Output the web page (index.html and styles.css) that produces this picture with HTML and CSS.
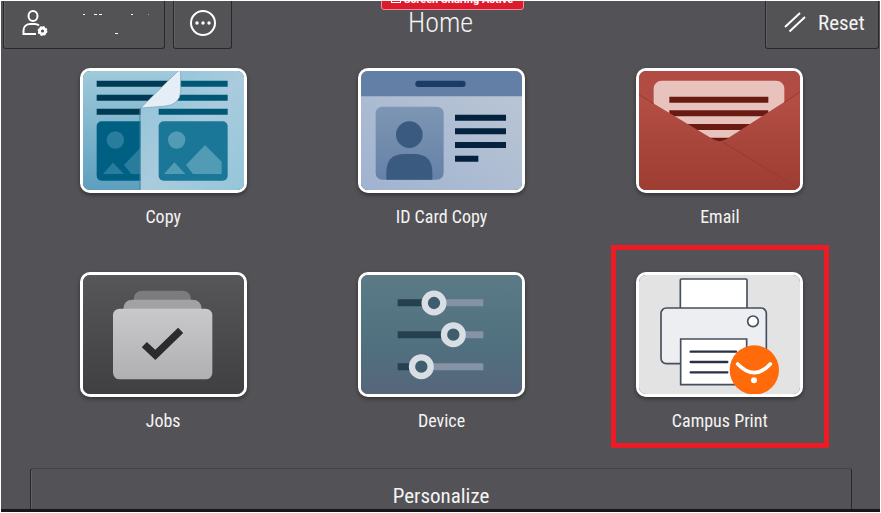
FILE: index.html
```html
<!DOCTYPE html>
<html lang="en">
<head>
	<meta charset="UTF-8">
	<title>Home</title>
	<link rel="stylesheet" href="styles.css">
</head>
<body>
	<div class="screen">
		<header class="topbar">
			<div class="topbar-left">
				<button class="btn btn-user" aria-label="User">
					<svg class="user-icon" viewBox="0 0 26 26" fill="none" stroke="#fff" stroke-width="2">
						<ellipse cx="11" cy="6" rx="4.5" ry="5"/>
						<path d="M14 24H1.500v-3.500c0-4 3-6.500 7-6.500h4c2 0 3.500.6 4.500 1.500"/>
						<circle cx="20.500" cy="21" r="3" stroke-width="2.800"/>
						<circle cx="20.500" cy="21" r="4.200" stroke-width="1.400" stroke-dasharray="1.900 1.400"/>
					</svg>
					<svg class="user-name" viewBox="0 0 70 26" fill="#fff">
						<path d="M2 4h2v1H2zM13 4h3v1h-3zM18 4h3v1h-3zM50 4h2v1h-2zM34 23h3v1h-3z"/>
						<path d="M67 4h1v1h-1z" opacity=".5"/>
					</svg>
				</button>
				<button class="btn btn-more" aria-label="More">
					<svg class="more-icon" viewBox="0 0 28 28">
						<circle cx="14" cy="14" r="12" fill="none" stroke="#fff" stroke-width="2"/>
						<g fill="#fff"><circle cx="8" cy="14" r="1.700"/><circle cx="14" cy="14" r="1.700"/><circle cx="20" cy="14" r="1.700"/></g>
					</svg>
				</button>
			</div>
			<h1 class="title">Home</h1>
			<div class="topbar-right">
				<button class="btn btn-reset">
					<svg class="reset-icon" viewBox="0 0 24 26" fill="none" stroke="#fff" stroke-width="2">
						<path d="M1 17L16 3M5.500 21.500L21 7"/>
					</svg>
					Reset
				</button>
			</div>
			<div class="sharing"><i class="sharing-icon"></i>Screen Sharing Active</div>
		</header>

		<main class="apps">
			<button class="tile">
				<span class="thumb">
					<svg viewBox="37 31 483 357" preserveAspectRatio="none">
						<defs>
							<linearGradient id="copyBack" x1="0" y1="0" x2="0" y2="1"><stop offset="0" stop-color="#a0cbdb"/><stop offset="1" stop-color="#5c9ebd"/></linearGradient>
							<linearGradient id="copyFront" x1="0" y1="0" x2="1" y2="1"><stop offset="0" stop-color="#8ec3d8"/><stop offset=".5" stop-color="#a9cbdd"/><stop offset="1" stop-color="#93c5d9"/></linearGradient>
						</defs>
						<path fill="url(#copyBack)" d="M28 22h501v375H28z"/>
						<path fill="#003a54" d="M78 60h230v18H78zM78 102h190v18H78zM78 144h150v18H78z"/>
						<rect x="78" y="182" width="200" height="178" rx="15" fill="#006083"/>
						<g fill="#287d9c"><circle cx="134" cy="238" r="26"/><path d="M97 340l30-34 33 34zM160 313l55-58v85h-33z"/></g>
						<path fill="#3c7d9b" opacity=".5" d="M205 142h10v255h-10z"/>
						<path fill="url(#copyFront)" d="M210 142L326 28l210-6v375H210z"/>
						<path fill="#005776" d="M300 60h171v18H300zM300 102h171v18H300zM264 144h207v18H264z"/>
						<rect x="264" y="182" width="207" height="178" rx="15" fill="#1b7797"/>
						<g fill="#519bb5"><circle cx="318" cy="238" r="26"/><path d="M280 340l31-35 33 35zM346 313l57-60 50 50v37h-86z"/></g>
						<path fill="#e5edf7" stroke="#769fb1" stroke-width="2" d="M210 142L322 31q8-5 8 7v54q-2 42-52 45z"/>
					</svg>
				</span>
				<span class="label">Copy</span>
			</button>

			<button class="tile">
				<span class="thumb">
					<svg viewBox="32 31 483 357" preserveAspectRatio="none">
						<defs>
							<linearGradient id="idBg" x1="1" y1="0" x2="0" y2="1"><stop offset="0" stop-color="#bdc8d5"/><stop offset="1" stop-color="#9fb2d0"/></linearGradient>
							<linearGradient id="idPhoto" x1="0" y1="0" x2="0" y2="1"><stop offset="0" stop-color="#7d96b3"/><stop offset="1" stop-color="#6681a8"/></linearGradient>
						</defs>
						<path fill="url(#idBg)" d="M23 22h501v375H23z"/>
						<path fill="#647fa6" d="M23 22h501v85H23z"/>
						<rect x="195" y="60" width="151" height="19" rx="9" fill="#1b3c67"/>
						<rect x="76" y="138" width="204" height="219" rx="20" fill="url(#idPhoto)"/>
						<circle cx="177" cy="222" r="40" fill="#3a5a80"/>
						<path fill="#3a5a80" d="M108 357v-22q0-55 55-55h28q55 0 55 55v22z"/>
						<path fill="#04213e" d="M314 162h153v18H314zM314 203h153v18H314zM314 244h153v18H314zM314 285h70v18h-70z"/>
					</svg>
				</span>
				<span class="label">ID Card Copy</span>
			</button>

			<button class="tile">
				<span class="thumb">
					<svg viewBox="32 31 483 357" preserveAspectRatio="none">
						<defs>
							<linearGradient id="mailBg" x1="0" y1="0" x2="0" y2="1"><stop offset="0" stop-color="#b55047"/><stop offset="1" stop-color="#9d3c31"/></linearGradient>
						</defs>
						<path fill="#b04c44" d="M23 22h501v375H23z"/>
						<rect x="76" y="60" width="392" height="250" rx="24" fill="#e8c3be"/>
						<path fill="#691a12" d="M123 108h297v18H123zM123 149h297v18H123zM123 190h297v18H123zM123 231h297v18H123z"/>
						<path fill="url(#mailBg)" d="M23 97l230 138q20 13 42 0L524 88v309H23z"/>
						<path fill="none" stroke="#983a33" stroke-width="3" d="M23 97l53 32M468 125l56-37M283 244l230 140"/>
					</svg>
				</span>
				<span class="label">Email</span>
			</button>

			<button class="tile">
				<span class="thumb">
					<svg viewBox="37 37 483 357" preserveAspectRatio="none">
						<defs>
							<linearGradient id="jobsBg" x1="0" y1="0" x2="0" y2="1"><stop offset="0" stop-color="#57575a"/><stop offset="1" stop-color="#3f3f41"/></linearGradient>
							<linearGradient id="jobsFolder" x1="0" y1="0" x2="0" y2="1"><stop offset="0" stop-color="#c9c9cc"/><stop offset="1" stop-color="#b0b0b3"/></linearGradient>
						</defs>
						<path fill="url(#jobsBg)" d="M28 28h501v375H28z"/>
						<path fill="#7c7c7f" d="M189 112q0-28 28-28h116q28 0 28 28z"/>
						<path fill="#a2a2a5" d="M158 140q0-29 29-29h177q29 0 29 29z"/>
						<rect x="127" y="138" width="298" height="212" rx="20" fill="url(#jobsFolder)"/>
						<path fill="none" stroke="#2b2b2d" stroke-width="22" d="M221 246l33 31 76-74"/>
					</svg>
				</span>
				<span class="label">Jobs</span>
			</button>

			<button class="tile">
				<span class="thumb">
					<svg viewBox="32 37 483 357" preserveAspectRatio="none">
						<defs>
							<linearGradient id="devBg" x1="0" y1="0" x2="0" y2="1"><stop offset="0" stop-color="#5c7b87"/><stop offset=".6" stop-color="#50707f"/><stop offset="1" stop-color="#57657a"/></linearGradient>
						</defs>
						<path fill="url(#devBg)" d="M23 28h501v375H23z"/>
						<path fill="#8493a5" d="M250 110h149v21H250zM308 206h91v21h-91zM212 302h187v21H212z"/>
						<path fill="#25404e" d="M142 110h108v21H142zM142 206h166v21H142zM142 302h70v21h-70z"/>
						<g fill="#3f5e6d" stroke="#d8dee4" stroke-width="19">
							<circle cx="251" cy="121" r="28"/>
							<circle cx="309" cy="216" r="28"/>
							<circle cx="213" cy="312" r="28"/>
						</g>
					</svg>
				</span>
				<span class="label">Device</span>
			</button>

			<button class="tile tile-marked">
				<span class="thumb">
					<svg viewBox="102 103 483 357" preserveAspectRatio="none">
						<path fill="#e3e3e4" d="M93 94h501v375H93z"/>
						<g stroke="#454f5e" stroke-width="5">
							<rect x="226" y="115" width="200" height="100" rx="3" fill="#fff"/>
							<rect x="168" y="202" width="316" height="167" rx="16" fill="#edeef1"/>
							<circle cx="444" cy="242" r="16" fill="#fff"/>
							<path fill="#fff" d="M227 295h198v137H227z"/>
							<path fill="none" stroke="#2a3046" stroke-width="7" stroke-linecap="round" d="M257 333h136M257 364h110M257 395h110"/>
						</g>
						<circle cx="448" cy="388" r="74" fill="#ff6a0b"/>
						<path fill="none" stroke="#fff" stroke-width="11" stroke-linecap="round" d="M398 370q50 52 98 0"/>
						<circle cx="447" cy="419" r="9" fill="#fff"/>
					</svg>
				</span>
				<span class="label">Campus Print</span>
			</button>
		</main>

		<footer class="bottom">
			<button class="btn btn-personalize">Personalize</button>
		</footer>
	</div>
</body>
</html>
```
FILE: styles.css
```css
*{
	margin:0;
	padding:0;
	box-sizing:border-box;
}
body{
	height:100vh;
	padding:1px;
	background:#fff;
	overflow:hidden;
	font-family:"Roboto Condensed", "Liberation Sans Narrow", Roboto, sans-serif;
	color:#f4f4f4;
}
button{
	border:none;
	background:none;
	color:inherit;
	font-family:inherit;
	cursor:pointer;
}
svg{
	display:block;
}
.screen{
	position:relative;
	display:flex;
	flex-direction:column;
	height:100%;
	background:#535256;
	border-bottom:3px solid #17161a;
	overflow:hidden;
}

/* top bar */
.topbar{
	display:grid;
	grid-template-columns:1fr auto 1fr;
	height:48px;
	flex:none;
}
.topbar-left,
.topbar-right{
	display:flex;
	gap:8px;
	padding:0 2px;
}
.topbar-right{
	justify-content:flex-end;
	padding:0 1px;
}
.btn{
	display:flex;
	align-items:center;
	border:1px solid #29292b;
	border-top:none;
	border-radius:0 0 3px 3px;
	background:#535355;
	box-shadow:inset 1px 0 #616164;
	font-size:21px;
	line-height:24px;
}
.btn-user{
	width:162px;
	gap:33px;
	padding:0 0 4px 18px;
}
.user-icon{
	width:26px;
	height:26px;
}
.user-name{
	width:70px;
	height:26px;
}
.btn-more{
	width:59px;
	justify-content:center;
	padding-bottom:4px;
}
.more-icon{
	width:28px;
	height:28px;
}
.btn-reset{
	width:114px;
	gap:10px;
	padding:0 0 4px 18px;
}
.reset-icon{
	width:24px;
	height:26px;
}
.title{
	font-size:28px;
	font-weight:300;
	line-height:44px;
}
.sharing{
	position:absolute;
	top:-12px;
	left:50%;
	width:143px;
	height:21px;
	margin-left:-60px;
	border:1px solid #f08b91;
	border-radius:3px;
	background:#dc1c2e;
	color:#fff;
	font:bold 11px/19px Roboto, sans-serif;
	white-space:nowrap;
	text-align:center;
}
.sharing-icon{
	display:inline-block;
	width:10px;
	height:7px;
	margin-right:3px;
	border:1px solid #fff;
}

/* apps */
.apps{
	display:grid;
	grid-template-columns:repeat(3, 1fr);
	row-gap:17px;
	justify-items:center;
	padding:0 21px 0 23px;
}
.tile{
	display:flex;
	flex-direction:column;
	align-items:center;
	width:202px;
	padding:19px 0 9px;
}
.tile-marked{
	outline:5px solid #ed1c24;
	outline-offset:3px;
}
.thumb{
	width:167px;
	height:125px;
	border:3px solid #fff;
	border-radius:10px;
	overflow:hidden;
	box-shadow:0 2px 4px rgba(0,0,0,.4);
}
.thumb svg{
	width:100%;
	height:100%;
}
.label{
	margin-top:14px;
	font-size:18px;
	line-height:20px;
}

/* bottom */
.bottom{
	flex:1;
	padding:28px 28px 0 29px;
	background:linear-gradient(transparent 80%, #3a393d);
}
.btn-personalize{
	width:100%;
	height:56px;
	justify-content:center;
	border-top:1px solid #444347;
	border-radius:3px;
	background:none;
}
```
